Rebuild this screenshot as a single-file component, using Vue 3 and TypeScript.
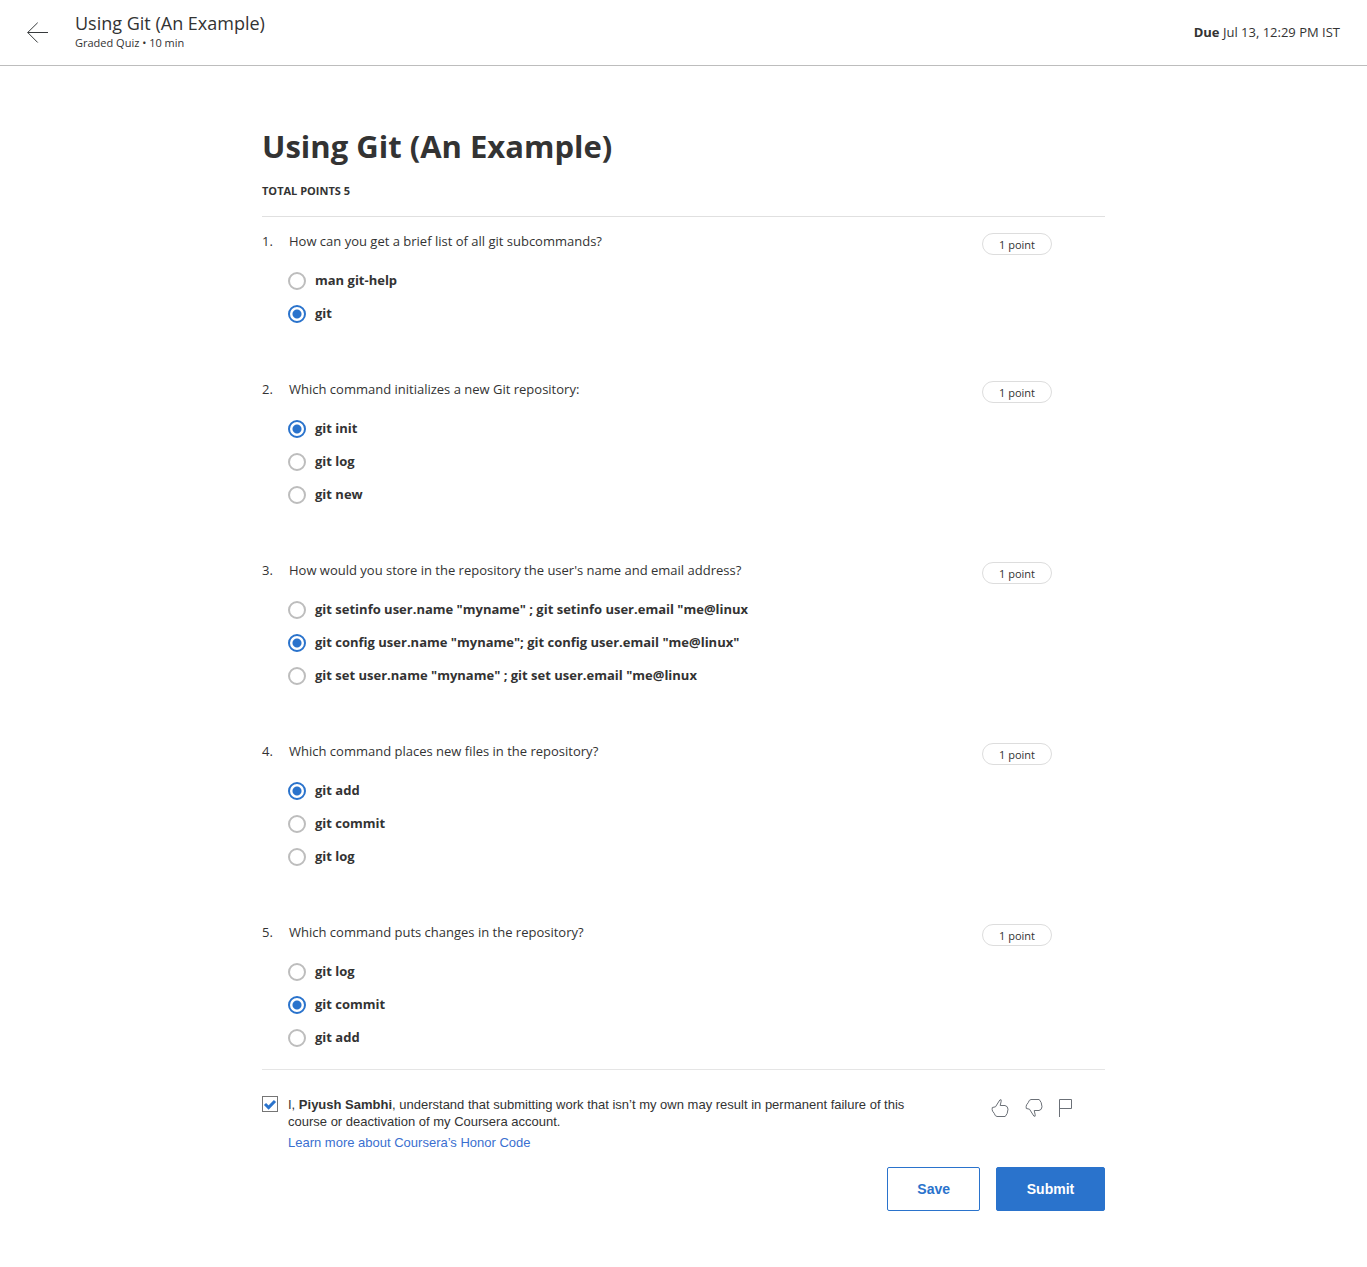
<script setup lang="ts">
import { ref } from 'vue'

interface Question {
  prompt: string
  options: string[]
  answer: number
}

const questions = ref<Question[]>([
  {
    prompt: 'How can you get a brief list of all git subcommands?',
    options: ['man git-help', 'git'],
    answer: 1,
  },
  {
    prompt: 'Which command initializes a new Git repository:',
    options: ['git init', 'git log', 'git new'],
    answer: 0,
  },
  {
    prompt: "How would you store in the repository the user's name and email address?",
    options: [
      'git setinfo user.name "myname" ; git setinfo user.email "me@linux',
      'git config user.name "myname"; git config user.email "me@linux"',
      'git set user.name "myname" ; git set user.email "me@linux',
    ],
    answer: 1,
  },
  {
    prompt: 'Which command places new files in the repository?',
    options: ['git add', 'git commit', 'git log'],
    answer: 0,
  },
  {
    prompt: 'Which command puts changes in the repository?',
    options: ['git log', 'git commit', 'git add'],
    answer: 1,
  },
])

const agreed = ref(true)
</script>

<template>
  <div class="page">
    <header class="topbar">
      <button class="icon-button back" type="button" aria-label="Back">
        <svg width="21" height="22" viewBox="0 0 21 22" fill="none" stroke="#373a3c">
          <path d="M0.7 10.5H21M10.7 0.7L0.7 10.5L10.7 20.5" />
        </svg>
      </button>
      <div class="heading">
        <div class="heading-title">Using Git (An Example)</div>
        <div class="heading-meta">Graded Quiz • 10 min</div>
      </div>
      <div class="due"><strong>Due</strong> Jul 13, 12:29 PM IST</div>
    </header>

    <main class="quiz">
      <h1 class="title">Using Git (An Example)</h1>
      <div class="total">TOTAL POINTS 5</div>

      <form class="form" @submit.prevent>
        <div class="questions">
          <section v-for="(q, i) in questions" :key="i" class="question">
            <div class="number">{{ i + 1 }}.</div>
            <div class="body" role="radiogroup" :aria-labelledby="`prompt-${i}`">
              <div :id="`prompt-${i}`" class="prompt">{{ q.prompt }}</div>
              <label v-for="(option, j) in q.options" :key="j" class="option">
                <input v-model="q.answer" class="radio" type="radio" :name="`question-${i}`" :value="j" />
                <span class="option-text">{{ option }}</span>
              </label>
            </div>
            <div class="points">1 point</div>
          </section>
        </div>

        <div class="footer">
          <input id="honor" v-model="agreed" class="checkbox" type="checkbox" />
          <div class="honor">
            <label for="honor" class="honor-text">
              I, <strong>Piyush Sambhi</strong>, understand that submitting work that isn’t my own may result in
              permanent failure of this course or deactivation of my Coursera account.
            </label>
            <a class="honor-link" href="#">Learn more about Coursera’s Honor Code</a>
          </div>
          <div class="feedback">
            <button class="icon-button" type="button" aria-label="Like">
              <svg width="18" height="20" viewBox="0 0 18 20" fill="none" stroke="#6b7077" stroke-linejoin="round">
                <path d="M4.5 8.8L8.8 2Q10.6 0.8 10.2 3.2L9.2 7.5H14Q16.8 8 17 11.2Q16.8 16 14.2 18.5H6Q4 18.3 3.2 15.3L1.6 13.2Q0.8 11.5 1.3 9.5Z" />
              </svg>
            </button>
            <button class="icon-button" type="button" aria-label="Dislike">
              <svg width="18" height="20" viewBox="0 0 18 20" fill="none" stroke="#6b7077" stroke-linejoin="round">
                <path d="M4.5 11.2L8.8 18Q10.6 19.2 10.2 16.8L9.2 12.5H14Q16.8 12 17 8.8Q16.8 4 14.2 1.5H6Q4 1.7 3.2 4.7L1.6 6.8Q0.8 8.5 1.3 10.5Z" />
              </svg>
            </button>
            <button class="icon-button" type="button" aria-label="Report">
              <svg width="14" height="20" viewBox="0 0 14 20" fill="none" stroke="#6b7077">
                <path d="M0.5 19V1.5H12.5V10.5H0.5" />
              </svg>
            </button>
          </div>
        </div>

        <div class="actions">
          <button class="button save" type="button">Save</button>
          <button class="button submit" type="submit">Submit</button>
        </div>
      </form>
    </main>
  </div>
</template>

<style>
body {
  margin: 0;
  background: #fff;
}
</style>

<style scoped>
.page {
  color: #333;
  font-family: "Open Sans", sans-serif;
  font-size: 13px;
  line-height: 16px;
}

.topbar {
  display: flex;
  align-items: center;
  height: 65px;
  padding: 0 27px;
  border-bottom: 1px solid #bdbdbd;
}

.icon-button {
  display: flex;
  padding: 0;
  border: 0;
  background: none;
  cursor: pointer;
}

.heading {
  flex: 1;
  margin-left: 27px;
  padding-bottom: 4px;
}

.heading-title {
  font-size: 18px;
  line-height: 24px;
}

.heading-meta {
  font-size: 11px;
}

.due {
  padding-bottom: 2px;
}

.quiz {
  box-sizing: border-box;
  max-width: 843px;
  margin: 0 auto;
  padding: 56px 0;
}

.title {
  margin: 0;
  font-size: 31px;
  line-height: 48px;
}

.total {
  margin-top: 13px;
  padding-bottom: 17px;
  border-bottom: 1px solid #e0e0e0;
  font-size: 11px;
  font-weight: 700;
}

.questions {
  display: grid;
  gap: 51px;
  padding: 16px 0 15px;
  border-bottom: 1px solid #e5e5e5;
}

.question {
  display: flex;
  align-items: flex-start;
  padding-right: 53px;
}

.number {
  flex: none;
  width: 26px;
}

.body {
  flex: 1;
}

.prompt {
  margin-bottom: 15px;
  padding-left: 1px;
}

.option {
  display: flex;
  align-items: center;
  gap: 9px;
  width: fit-content;
  height: 33px;
  font-weight: 700;
  cursor: pointer;
}

.option-text {
  padding-bottom: 2px;
}

.radio {
  flex: none;
  appearance: none;
  box-sizing: border-box;
  width: 18px;
  height: 18px;
  margin: 0;
  border: 2px solid #bdbdbd;
  border-radius: 50%;
  background: #fff;
}

.radio:checked {
  border-color: #2a73cc;
  background: radial-gradient(circle, #2a73cc 4px, #fff 5px);
}

.points {
  box-sizing: border-box;
  width: 70px;
  height: 22px;
  border: 1px solid #ddd;
  border-radius: 11px;
  font-size: 11px;
  line-height: 22px;
  text-align: center;
}

.footer {
  display: flex;
  align-items: flex-start;
  padding-top: 26px;
  font-family: "Liberation Sans", Arial, sans-serif;
  line-height: 17px;
}

.checkbox {
  flex: none;
  appearance: none;
  box-sizing: border-box;
  width: 16px;
  height: 16px;
  margin: 0 10px 0 0;
  border: 1px solid #757575;
  background: #fff;
}

.checkbox:checked {
  background: #fff url("data:image/svg+xml,%3Csvg xmlns='http://www.w3.org/2000/svg' viewBox='0 0 14 14'%3E%3Cpath d='M2 7l3.6 3.6L12 4' fill='none' stroke='%232a73cc' stroke-width='3'/%3E%3C/svg%3E") center / 14px;
}

.honor {
  display: grid;
  gap: 4px;
  max-width: 630px;
}

.honor-link {
  color: #3a6fd0;
  text-decoration: none;
}

.feedback {
  display: flex;
  gap: 16px;
  margin-left: auto;
  padding: 2px 32px 0 0;
}

.actions {
  display: flex;
  justify-content: flex-end;
  gap: 16px;
  margin-top: 16px;
}

.button {
  box-sizing: border-box;
  height: 44px;
  padding: 0 29px;
  border: 1px solid #2a73cc;
  border-radius: 2px;
  font: 700 14px "Liberation Sans", Arial, sans-serif;
  cursor: pointer;
}

.save {
  background: #fff;
  color: #2a73cc;
}

.submit {
  min-width: 109px;
  background: #2a73cc;
  color: #fff;
}
</style>
